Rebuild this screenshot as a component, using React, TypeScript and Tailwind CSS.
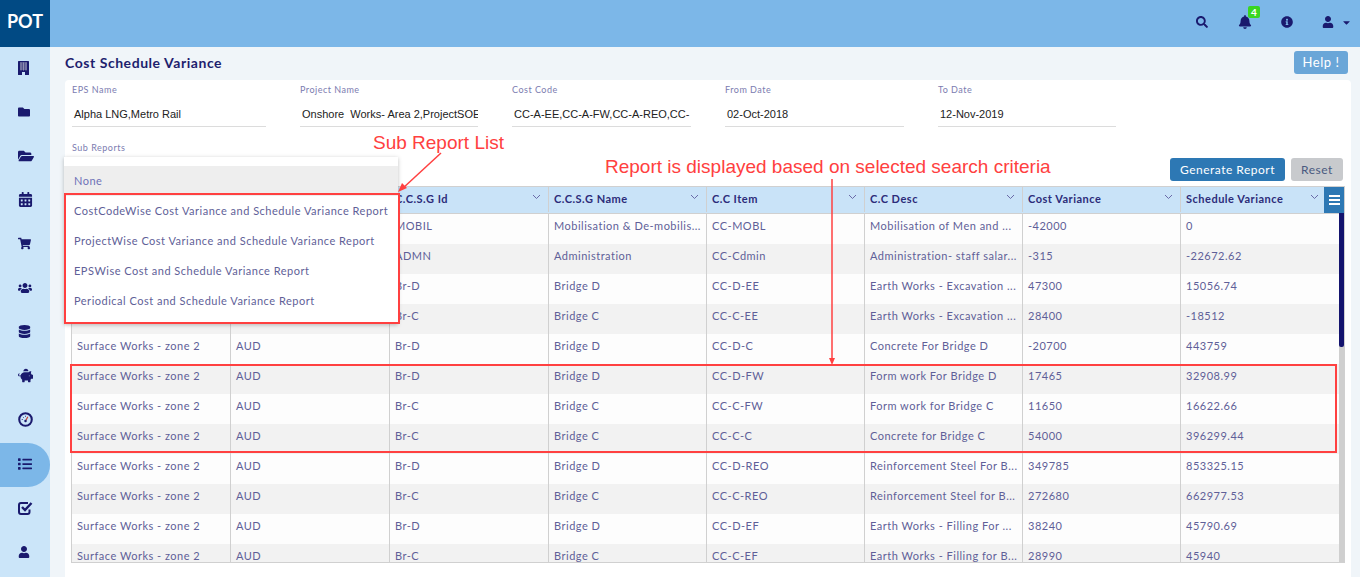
import React from 'react';
import {
  FaBell, FaCalendarAlt, FaCaretDown, FaDatabase, FaFolder, FaFolderOpen, FaInfoCircle,
  FaList, FaPiggyBank, FaSearch, FaShoppingCart, FaUser, FaUsers,
} from 'react-icons/fa';

function BuildingIcon() {
  return (
    <svg width="11" height="14" viewBox="0 0 11 14">
      <rect width="11" height="14" rx="0.5" fill="currentColor" />
      <path d="M2 2h7M2 4h7M2 6h7M2 8h7M3 1.5v8M5.5 1.5v8M8 1.5v8" stroke="#8f8fb0" strokeWidth="1" />
      <rect x="4" y="11" width="3" height="3" fill="#cbe5f9" />
    </svg>
  );
}

function GaugeIcon() {
  return (
    <svg width="15" height="15" viewBox="0 0 16 16" fill="none">
      <circle cx="8" cy="8" r="6.7" stroke="currentColor" strokeWidth="2.2" />
      <path d="M8 9.5 L10.5 5" stroke="#c0392b" strokeWidth="1.2" />
      <circle cx="8" cy="9.5" r="1.3" fill="currentColor" />
      <path d="M4 8h1M5.3 5.3l.7.7M8 4v1" stroke="currentColor" strokeWidth="1" />
    </svg>
  );
}

function CheckSquareIcon() {
  return (
    <svg width="15" height="14" viewBox="0 0 15 14" fill="none">
      <path d="M10 2H3a2 2 0 0 0-2 2v7a2 2 0 0 0 2 2h6.5a2 2 0 0 0 2-2V8.5" stroke="currentColor" strokeWidth="2" />
      <path d="M4 6l3 3 6.5-7" stroke="currentColor" strokeWidth="2.4" />
    </svg>
  );
}

const navItems = [
  { icon: <BuildingIcon /> },
  { icon: <FaFolder size={12} /> },
  { icon: <FaFolderOpen size={16} /> },
  { icon: <FaCalendarAlt size={15} /> },
  { icon: <FaShoppingCart size={13} /> },
  { icon: <FaUsers size={14} /> },
  { icon: <FaDatabase size={13} /> },
  { icon: <FaPiggyBank size={15} /> },
  { icon: <GaugeIcon /> },
  { icon: <FaList size={14} />, active: true },
  { icon: <CheckSquareIcon /> },
  { icon: <FaUser size={12} /> },
];

const fields = [
  { label: 'EPS Name', value: 'Alpha LNG,Metro Rail', width: 'w-[194px]' },
  { label: 'Project Name', value: 'Onshore  Works- Area 2,ProjectSOE', width: 'w-[178px]' },
  { label: 'Cost Code', value: 'CC-A-EE,CC-A-FW,CC-A-REO,CC-', width: 'w-[179px]' },
  { label: 'From Date', value: '02-Oct-2018', width: 'w-[179px]' },
  { label: 'To Date', value: '12-Nov-2019', width: 'w-[178px]' },
];

const columns = ['C.C.S.G Id', 'C.C.S.G Name', 'C.C Item', 'C.C Desc', 'Cost Variance', 'Schedule Variance'];

const rows = [
  ['MOBIL', 'Mobilisation & De-mobilis...', 'CC-MOBL', 'Mobilisation of Men and ...', '-42000', '0'],
  ['ADMN', 'Administration', 'CC-Cdmin', 'Administration- staff salar...', '-315', '-22672.62'],
  ['Br-D', 'Bridge D', 'CC-D-EE', 'Earth Works - Excavation ...', '47300', '15056.74'],
  ['Br-C', 'Bridge C', 'CC-C-EE', 'Earth Works - Excavation ...', '28400', '-18512'],
  ['Br-D', 'Bridge D', 'CC-D-C', 'Concrete For Bridge D', '-20700', '443759'],
  ['Br-D', 'Bridge D', 'CC-D-FW', 'Form work For Bridge D', '17465', '32908.99'],
  ['Br-C', 'Bridge C', 'CC-C-FW', 'Form work for Bridge C', '11650', '16622.66'],
  ['Br-C', 'Bridge C', 'CC-C-C', 'Concrete for Bridge C', '54000', '396299.44'],
  ['Br-D', 'Bridge D', 'CC-D-REO', 'Reinforcement Steel For B...', '349785', '853325.15'],
  ['Br-C', 'Bridge C', 'CC-C-REO', 'Reinforcement Steel for B...', '272680', '662977.53'],
  ['Br-D', 'Bridge D', 'CC-D-EF', 'Earth Works - Filling For ...', '38240', '45790.69'],
  ['Br-C', 'Bridge C', 'CC-C-EF', 'Earth Works - Filling for B...', '28990', '45940'],
];

const subReports = [
  'CostCodeWise Cost Variance and Schedule Variance Report',
  'ProjectWise Cost Variance and Schedule Variance Report',
  'EPSWise Cost and Schedule Variance Report',
  'Periodical Cost and Schedule Variance Report',
];

function Chevron() {
  return (
    <svg width="9" height="6" viewBox="0 0 9 6" fill="none" className="text-[#6a6aa8]">
      <path d="M1 1l3.5 3.5L8 1" stroke="currentColor" strokeWidth="1" />
    </svg>
  );
}

export default function App() {
  return (
    <div className="relative w-[1360px] h-[577px] overflow-hidden bg-[#f0f5f9] font-['Lato',sans-serif] text-[11px] tracking-[0.5px] text-[#5f5f98]">
      {/* top bar */}
      <header className="flex h-[47px] bg-[#7cb7e8] text-[#1a1a6e]">
        <div className="flex w-[50px] items-center justify-center bg-[#014a84] pb-[5px] text-[18px] font-bold tracking-normal text-white">
          POT
        </div>
        <div className="flex flex-1 items-center justify-end pb-[3px]">
          <FaSearch size={12} className="mr-[30px]" />
          <div className="relative mr-[29px]">
            <FaBell size={14} />
            <span className="absolute -top-[9px] left-[10px] flex h-[12px] w-[12px] items-center justify-center rounded-[2px] bg-[#39d621] text-[10px] font-bold tracking-normal text-white">
              4
            </span>
          </div>
          <FaInfoCircle size={12} className="mr-[29px]" />
          <FaUser size={12} />
          <FaCaretDown size={11} className="ml-[7px] mr-[8px]" />
        </div>
      </header>

      <div className="flex h-[530px]">
        {/* sidebar */}
        <nav className="w-[50px] shrink-0 bg-[#cbe5f9] text-[#1a1a6e]">
          {navItems.map((item, i) => (
            <div
              key={i}
              className={`flex h-[44px] items-center pb-[3px] pl-[18px] ${item.active ? 'rounded-r-[22px] bg-[#7cb7e8]' : ''}`}
            >
              {item.icon}
            </div>
          ))}
        </nav>

        <main className="flex min-w-0 flex-1 flex-col pl-[15px] pr-[9px]">
          <div className="flex h-[33px] items-center justify-between">
            <h1 className="pb-[2px] text-[14px] font-bold tracking-[0.55px] text-[#1e1e6e]">Cost Schedule Variance</h1>
            <button className="mr-[3px] mt-[4px] h-[23px] w-[54px] self-start rounded-[3px] bg-[#6aa6d8] text-[13px] font-normal text-white">
              Help !
            </button>
          </div>

          <section className="flex-1 rounded-t-[4px] bg-white pl-[7px] pr-[6px] pt-[3px]">
            <div className="flex gap-[34px]">
              {fields.map((f) => (
                <div key={f.label} className={f.width}>
                  <div className="h-[14px] text-[9px] leading-[14px] text-[#7c7cb0]">{f.label}</div>
                  <div className="mt-[4px] h-[26px] overflow-hidden whitespace-nowrap border-b border-[#dcdcdc] pl-[2px] font-['Liberation_Sans',sans-serif] text-[11px] leading-[26px] tracking-normal text-[#222]">
                    {f.value.replace(/  /g, '\u00a0 ')}
                  </div>
                </div>
              ))}
            </div>

            <div className="mt-[14px] flex h-[45px] items-start justify-between">
              <div className="h-[14px] text-[9px] leading-[14px] text-[#7c7cb0]">Sub Reports</div>
              <div className="mr-[2px] mt-[17px] flex gap-[6px]">
                <button className="h-[23px] w-[115px] rounded-[3px] bg-[#2d78b4] text-[12px] text-white">Generate Report</button>
                <button className="h-[23px] w-[52px] rounded-[3px] bg-[#c8cacd] text-[12px] text-[#4a5a80]">Reset</button>
              </div>
            </div>

            {/* grid */}
            <div className="relative -ml-[1px] h-[377px] w-[1274px] overflow-hidden border border-[#d0d0d0]">
              <div className="flex h-[27px] border-b border-[#d0d0d0] bg-[#c9e3f8] pb-[1px] font-bold text-[#2c2c7a]">
                <div className="w-[159px] border-r border-[#d0d0d0]" />
                <div className="w-[159px] border-r border-[#d0d0d0]" />
                {columns.map((c, i) => (
                  <div
                    key={c}
                    className={`relative flex items-center pl-[5px] ${i === 0 ? 'w-[159px]' : 'w-[158px]'} ${i < 5 ? 'border-r border-[#d0d0d0]' : ''}`}
                  >
                    {c}
                    <span className={`absolute top-[7px] ${i === 5 ? 'right-[20px]' : 'right-[7px]'}`}>
                      <Chevron />
                    </span>
                  </div>
                ))}
              </div>
              <span className="absolute right-0 top-0 flex h-[26px] w-[20px] flex-col items-center justify-center gap-[2px] bg-[#2d78b4]">
                <i className="h-[2px] w-[11px] bg-white" />
                <i className="h-[2px] w-[11px] bg-white" />
                <i className="h-[2px] w-[11px] bg-white" />
              </span>
              {rows.map((row, i) => (
                <div key={i} className={`flex h-[30px] ${i % 2 ? 'bg-[#f2f2f2]' : 'bg-[#fdfdfd]'}`}>
                  <div className="w-[159px] border-r border-[#d0d0d0] pl-[5px] leading-[23px]">Surface Works - zone 2</div>
                  <div className="w-[159px] border-r border-[#d0d0d0] pl-[5px] leading-[23px]">AUD</div>
                  {row.map((cell, j) => (
                    <div
                      key={j}
                      className={`overflow-hidden whitespace-nowrap pl-[5px] leading-[23px] ${j === 0 ? 'w-[159px]' : 'w-[158px]'} ${j < 5 ? 'border-r border-[#d0d0d0]' : ''}`}
                    >
                      {cell}
                    </div>
                  ))}
                </div>
              ))}
              {/* scrollbar */}
              <div className="absolute bottom-0 right-0 top-[26px] w-[5px] bg-[#cfcfcf]">
                <div className="h-[134px] rounded-b-[2px] bg-[#14146e]" />
              </div>
            </div>
          </section>
        </main>
      </div>

      {/* open sub report menu */}
      <div className="absolute left-[64px] top-[157px] h-[167px] w-[334px] bg-white shadow-[0_1px_4px_rgba(0,0,0,0.25)]">
        <div className="mt-[9px] h-[30px] bg-[#eeeeee] pl-[10px] leading-[30px] text-[#6f72b8]">None</div>
        {subReports.map((r) => (
          <div key={r} className="h-[30px] pl-[10px] leading-[30px]">
            {r}
          </div>
        ))}
      </div>

      {/* annotations */}
      <div className="pointer-events-none absolute left-[64px] top-[193px] h-[131px] w-[336px] border-2 border-[#ff4040]" />
      <div className="pointer-events-none absolute left-[70px] top-[364px] h-[89px] w-[1267px] border-2 border-[#ff4040]" />
      <span className="absolute left-[373px] top-[132px] font-['Liberation_Sans',sans-serif] text-[19px] leading-[22px] tracking-normal text-[#ff4040]">
        Sub Report List
      </span>
      <span className="absolute left-[605px] top-[156px] font-['Liberation_Sans',sans-serif] text-[19px] leading-[22px] tracking-normal text-[#ff4040]">
        Report is displayed based on selected search criteria
      </span>
      <svg className="pointer-events-none absolute left-0 top-0" width="1360" height="577">
        <path d="M441 153 L402 189" stroke="#ff4040" strokeWidth="1.5" />
        <path d="M398 192 L407 188 L402 183 Z" fill="#ff4040" />
        <path d="M832 179 L832 360" stroke="#ff4040" strokeWidth="1.5" />
        <path d="M832 365 L829 358 L835 358 Z" fill="#ff4040" />
      </svg>
    </div>
  );
}
